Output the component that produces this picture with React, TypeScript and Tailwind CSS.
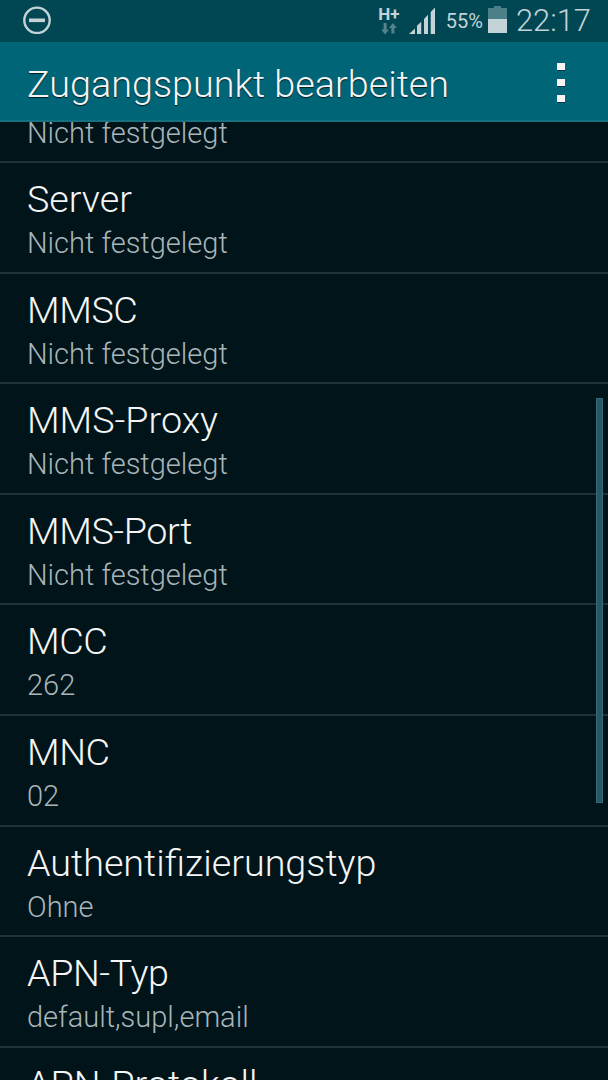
import clsx from 'clsx'

type Preference = {
  title?: string
  summary?: string
  acronym?: boolean
}

const preferences: Preference[] = [
  { summary: 'Nicht festgelegt' },
  { title: 'Server', summary: 'Nicht festgelegt' },
  { title: 'MMSC', summary: 'Nicht festgelegt', acronym: true },
  { title: 'MMS-Proxy', summary: 'Nicht festgelegt' },
  { title: 'MMS-Port', summary: 'Nicht festgelegt', acronym: true },
  { title: 'MCC', summary: '262', acronym: true },
  { title: 'MNC', summary: '02', acronym: true },
  { title: 'Authentifizierungstyp', summary: 'Ohne' },
  { title: 'APN-Typ', summary: 'default,supl,email', acronym: true },
  { title: 'APN-Protokoll' },
]

const BlockingModeIcon = () => (
  <svg className="w-7 h-7" viewBox="0 0 28 28" fill="none">
    <circle cx="14" cy="14.3" r="12.7" stroke="#c3d3d7" strokeWidth="2.4" />
    <rect x="6" y="12.5" width="16" height="3.6" fill="#c3d3d7" />
  </svg>
)

const NetworkIcon = () => (
  <div className="flex flex-col items-center w-[22px]">
    <span className="text-[17px] leading-[14px] font-bold text-[#c3d3d7]">
      H+
    </span>
    <svg className="w-4 h-3 mt-[2px]" viewBox="0 0 16 12" fill="#55838b">
      <path d="M2.6 0h3v6.5h2.4L4.1 11.4 0.2 6.5h2.4z" />
      <path d="M10.4 10.6h3V4.9h2.4L11.9 0 8 4.9h2.4z" />
    </svg>
  </div>
)

const SignalIcon = () => (
  <svg className="w-[27px] h-[27px]" viewBox="0 0 27 27" fill="#c3d3d7">
    <path d="M0 27L6 21.4V27z" />
    <path d="M8 18.8L12.2 14.8V27H8z" />
    <path d="M15 12L19 7.8V27h-4z" />
    <path d="M21.7 5L26 0.5V27h-4.3z" />
  </svg>
)

const BatteryIcon = () => (
  <svg className="w-[19px] h-[27px]" viewBox="0 0 19 27">
    <path d="M6 0h7v2h6v25H0V2h6z" fill="#4b8089" />
    <rect y="13" width="19" height="14" fill="#c3d3d7" />
  </svg>
)

const StatusBar = () => (
  <div className="flex shrink-0 h-[42px] pl-[23px] pr-[17px] justify-between bg-[#004753] text-[#c3d3d7]">
    <div className="pt-[6px]">
      <BlockingModeIcon />
    </div>
    <div className="flex items-start">
      <div className="pt-[7px] mr-[9px]">
        <NetworkIcon />
      </div>
      <div className="pt-[7px] mr-[10px]">
        <SignalIcon />
      </div>
      <span className="text-[20px] leading-[42px] mr-[5px]">55%</span>
      <div className="pt-[6px] mr-[9px]">
        <BatteryIcon />
      </div>
      <span className="text-[30.9px] leading-[41px] font-light">22:17</span>
    </div>
  </div>
)

const ActionBar = () => (
  <header className="flex shrink-0 items-center justify-between h-20 pl-[27px] pr-[43px] bg-[#006577] border-b-2 border-[#15707f]">
    <h1 className="text-[37.75px] leading-[72px] pt-[5px] font-light text-[#f5f5f5] whitespace-nowrap [text-shadow:0_1px_1px_#001c22]">
      Zugangspunkt bearbeiten
    </h1>
    <button
      type="button"
      aria-label="Menü"
      className="flex flex-col gap-[9px] pt-[2px]"
    >
      {[0, 1, 2].map((dot) => (
        <span
          key={dot}
          className="w-2 h-[7px] bg-[#f5f5f5] shadow-[0_1px_0_#003c48]"
        />
      ))}
    </button>
  </header>
)

const PreferenceItem = ({ title, summary, acronym }: Preference) => (
  <li
    className={clsx(
      'shrink-0 pl-[27px] border-b-2 border-[#1f3238] font-light whitespace-nowrap',
      title ? 'h-[110.6px] pt-[13px]' : 'h-[41px]'
    )}
  >
    {title && (
      <p
        className={clsx(
          'text-[37.7px] leading-[46px] text-[#f5f5f5]',
          acronym && 'tracking-[-0.4px]'
        )}
      >
        {title}
      </p>
    )}
    {summary && (
      <p
        className={clsx(
          'text-[29px] text-[#a9b5b9]',
          title ? 'leading-[42px]' : 'leading-[22px]'
        )}
      >
        {summary}
      </p>
    )}
  </li>
)

const App = () => {
  return (
    <div
      className={clsx(
        'relative flex flex-col w-[608px] h-[1080px] overflow-hidden bg-[#00141a]',
        'font-[Roboto,sans-serif]'
      )}
    >
      <StatusBar />
      <ActionBar />
      <main className="flex-1 min-h-0 overflow-hidden">
        <ul className="flex flex-col">
          {preferences.map((preference, index) => (
            <PreferenceItem key={index} {...preference} />
          ))}
        </ul>
      </main>
      {/* scroll thumb */}
      <div className="absolute right-[5px] top-[398px] w-[7px] h-[405px] bg-[#285867] border border-[#346a78]" />
    </div>
  )
}

export default App
